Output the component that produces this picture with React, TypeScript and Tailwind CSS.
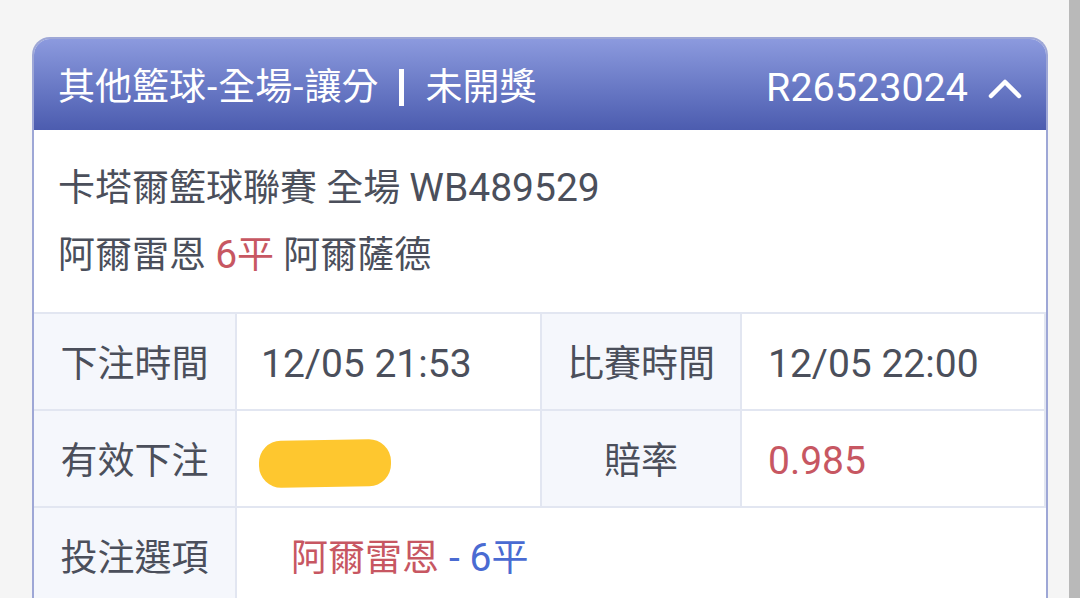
const FONT = "font-['Roboto','Noto_Sans_CJK_TC',sans-serif]";

function ChevronUp() {
  return (
    <svg width="34" height="22" viewBox="0 0 34 22" fill="none">
      <path d="M3 19 L17 5 L31 19" stroke="white" strokeWidth="4.5" strokeLinecap="round" strokeLinejoin="round" />
    </svg>
  );
}

// latin runs render a touch bigger than the CJK glyphs
function L({ children }: { children: React.ReactNode }) {
  return <span className="text-[39px]">{children}</span>;
}

function Label({ children, last }: { children: React.ReactNode; last?: boolean }) {
  return (
    <div
      className={`flex items-center justify-center bg-[#f5f7fc] border-t-2 border-[#e2e6f1] ${last ? "" : "border-r-2"} h-[97px] pt-[6px]`}
    >
      {children}
    </div>
  );
}

function Value({ children, className = "" }: { children: React.ReactNode; className?: string }) {
  return (
    <div className={`flex items-center border-t-2 border-r-2 border-[#e2e6f1] h-[97px] pt-[6px] pl-[24px] ${className}`}>
      {children}
    </div>
  );
}

export default function App() {
  return (
    <div className={`flex w-[1080px] h-[598px] overflow-hidden bg-[#f5f5f5] ${FONT} text-[#4b4f5b]`}>
      <div className="flex-1 pt-[37px] pl-[32px] pr-[21px]">
        <div className="rounded-t-[18px] border-2 border-b-0 border-[#9ea7d6] bg-white overflow-hidden">
          {/* header */}
          <div className="flex items-center justify-between h-[91px] pt-[6px] px-[24px] bg-gradient-to-b from-[#8c9ade] to-[#4c5caf] text-white text-[37px]">
            <div className="flex items-center">
              <span>
                其他籃球<span className="mx-[1px]">-</span>全場<span className="mx-[1px]">-</span>讓分
              </span>
              <span className="mx-[21px] w-[5px] h-[37px] bg-white" />
              <span>未開獎</span>
            </div>
            <div className="flex items-center gap-[20px]">
              <span className="text-[39.5px]">R26523024</span>
              <ChevronUp />
            </div>
          </div>

          {/* match info */}
          <div className="px-[24px] pt-[25px] pb-[23px] text-[37px] leading-[67px]">
            <div>
              卡塔爾籃球聯賽 全場 <L>WB489529</L>
            </div>
            <div>
              阿爾雷恩 <span className="text-[#c75762]"><L>6</L>平</span> 阿爾薩德
            </div>
          </div>

          {/* detail table */}
          <div className="grid grid-cols-[203px_305px_200px_1fr] text-[37px]">
            <Label>下注時間</Label>
            <Value><L>12/05 21:53</L></Value>
            <Label>比賽時間</Label>
            <Value className="border-r-0 pl-[26px]"><L>12/05 22:00</L></Value>

            <Label>有效下注</Label>
            <Value>
              <span className="block w-[132px] h-[47px] rounded-[22px] bg-[#fec72f] -ml-[2px] translate-y-[2px] -rotate-1" />
            </Value>
            <Label>賠率</Label>
            <Value className="border-r-0 pl-[26px] text-[#c75762]"><L>0.985</L></Value>

            <Label>投注選項</Label>
            <div className="col-span-3 flex items-center border-t-2 border-[#e2e6f1] h-[97px] pt-[6px] pl-[54px]">
              <span className="text-[#c75762]">阿爾雷恩</span>
              <span className="text-[#4a6bd2] ml-[10px]"><L>- 6</L>平</span>
            </div>
          </div>
        </div>
      </div>
      <div className="w-[11px] h-full bg-[#b9b9b9]" />
    </div>
  );
}
